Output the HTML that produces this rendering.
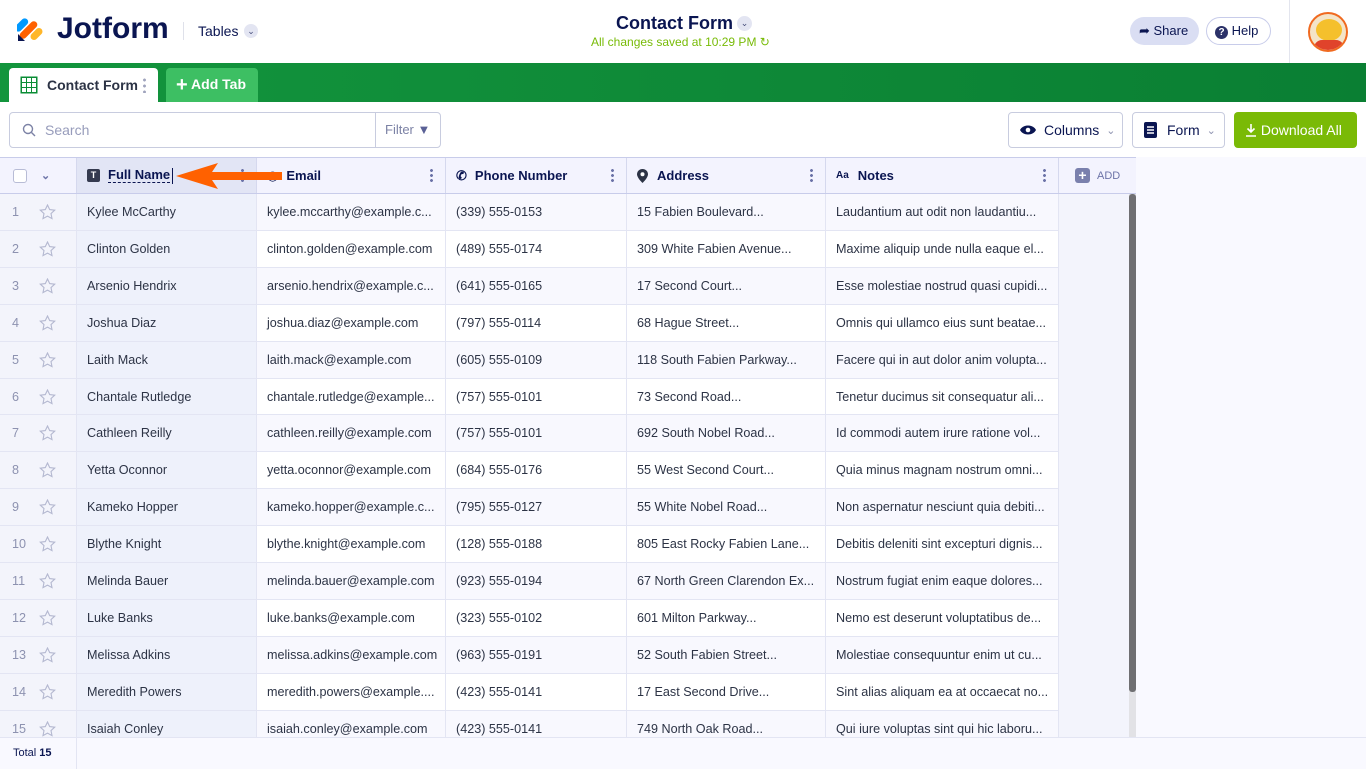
<!DOCTYPE html>
<html><head><meta charset="utf-8"><style>
*{box-sizing:border-box;margin:0;padding:0}
body{width:1366px;height:768px;overflow:hidden;font-family:"Liberation Sans",sans-serif;background:#f9f9ff;color:#2c3345;position:relative}
.top{position:absolute;left:0;top:0;width:1366px;height:63px;background:#fff}
.band{position:absolute;left:0;top:63px;width:1366px;height:39px;background:linear-gradient(90deg,#13953d,#0a7f33)}
.tool{position:absolute;left:0;top:102px;width:1366px;height:55px;background:#fff}
.btn{position:absolute;border:1px solid #c8ccdf;border-radius:4px;background:#fff;font-size:14px;color:#0a1551;display:flex;align-items:center}
.hdr{position:absolute;top:157px;left:0;height:37px;width:1136px;background:#f3f3fe;border-top:1px solid #c8ccea;border-bottom:1px solid #c8ccea}
.hc{position:absolute;top:0;height:35px;border-right:1px solid #d5d8ee;font-size:13px;font-weight:bold;color:#0a1551;display:flex;align-items:center;padding-left:10px}
.dots{position:absolute;right:12px;top:10px;width:3px;height:14px;background:radial-gradient(circle,#6c73a8 1.3px,transparent 1.6px) 0 0/3px 5px repeat-y}
.row{position:absolute;left:0;width:1059px;border-bottom:1px solid #e3e5f3;font-size:12.6px;color:#2c3345}
.row.o{background:#f8f8fe}.row.e{background:#fff}
.c{position:absolute;top:0;bottom:0;line-height:37px;padding-left:10px;white-space:nowrap;overflow:hidden;border-right:1px solid #e3e5f3}
.n{left:0;width:77px;background:#f3f4fb;color:#8d92b0;padding-left:12px}
.nm{left:77px;width:180px;background:#eef1fb}
.em{left:257px;width:189px}.ph{left:446px;width:181px}.ad{left:627px;width:199px}.no{left:826px;width:233px}
.star{position:absolute;left:39px;top:10px}
</style></head><body>
<div class="top">
 <svg style="position:absolute;left:17px;top:14px" width="28" height="28" viewBox="0 0 28 28"><rect x="1" y="3" width="7" height="16" rx="3.5" transform="rotate(45 4.5 11)" fill="#0099ff"/><rect x="8" y="5" width="7" height="22" rx="3.5" transform="rotate(45 11.5 16)" fill="#ff6100"/><rect x="16" y="13" width="7" height="14" rx="3.5" transform="rotate(45 19.5 20)" fill="#ffb629"/><path d="M1 20v7h7z" fill="#0a1551"/></svg>
 <div style="position:absolute;left:57px;top:12px;font-size:30px;font-weight:bold;color:#0a1551;letter-spacing:0px">Jotform</div>
 <div style="position:absolute;left:183px;top:22px;width:1px;height:18px;background:#dfe1ea"></div>
 <div style="position:absolute;left:198px;top:23px;font-size:14px;color:#0a1551">Tables</div>
 <div style="position:absolute;left:244px;top:24px;width:14px;height:14px;border-radius:50%;background:#e3e5f2;font-size:9px;text-align:center;line-height:14px;color:#454c7a">⌄</div>
 <div style="position:absolute;left:616px;top:13px;font-size:18px;font-weight:bold;color:#0a1551">Contact Form</div>
 <div style="position:absolute;left:737px;top:16px;width:15px;height:15px;border-radius:50%;background:#e3e5f2;font-size:9px;text-align:center;line-height:14px;color:#454c7a">⌄</div>
 <div style="position:absolute;left:591px;top:35px;font-size:12px;color:#78bb07">All changes saved at 10:29 PM ↻</div>
 <div style="position:absolute;left:1130px;top:17px;width:69px;height:28px;border-radius:14px;background:#dadef3;font-size:13px;color:#0a1551;line-height:28px;padding-left:9px">➦ Share</div>
 <div style="position:absolute;left:1206px;top:17px;width:65px;height:28px;border-radius:14px;border:1px solid #c8ccea;font-size:13px;color:#0a1551;line-height:26px;padding-left:8px"><span style="display:inline-block;width:13px;height:13px;border-radius:50%;background:#2b3168;color:#fff;font-size:10px;text-align:center;line-height:13px;font-weight:bold">?</span> Help</div>
 <div style="position:absolute;left:1289px;top:0;width:1px;height:63px;background:#e3e5ee"></div>
 <div style="position:absolute;left:1308px;top:12px;width:40px;height:40px;border-radius:50%;background:#f4e4c8;border:2px solid #f06a20;overflow:hidden"><div style="position:absolute;left:6px;top:5px;width:26px;height:22px;border-radius:50%;background:#f5c02c"></div><div style="position:absolute;left:4px;top:26px;width:30px;height:14px;background:#e0432b;border-radius:8px 8px 0 0"></div></div>
</div>
<div class="band">
 <div style="position:absolute;left:9px;top:5px;width:149px;height:34px;background:#fff;border-radius:4px 4px 0 0">
  <svg style="position:absolute;left:11px;top:8px" width="18" height="18" viewBox="0 0 18 18"><rect x="0.5" y="0.5" width="17" height="17" fill="#0a8d35"/><g fill="#fff"><rect x="2" y="2" width="4" height="4"/><rect x="7" y="2" width="4" height="4"/><rect x="12" y="2" width="4" height="4"/><rect x="2" y="7" width="4" height="4"/><rect x="7" y="7" width="4" height="4"/><rect x="12" y="7" width="4" height="4"/><rect x="2" y="12" width="4" height="4"/><rect x="7" y="12" width="4" height="4"/><rect x="12" y="12" width="4" height="4"/></g></svg>
  <div style="position:absolute;left:38px;top:9px;font-size:14px;font-weight:bold;color:#2c3345">Contact Form</div>
  <div style="position:absolute;left:134px;top:9px;width:3px;height:16px;background:radial-gradient(circle,#a0a4bd 1.3px,transparent 1.6px) 0 0/3px 6px repeat-y"></div>
 </div>
 <div style="position:absolute;left:166px;top:5px;width:92px;height:34px;background:#3dbf63;border-radius:4px 4px 0 0;color:#fff;font-size:14px;font-weight:bold;line-height:33px;padding-left:10px"><span style="font-size:20px;vertical-align:-2px">+</span> Add Tab</div>
</div>
<div class="tool">
 <div class="btn" style="left:9px;top:10px;width:432px;height:36px">
  <svg style="margin-left:12px" width="14" height="14" viewBox="0 0 14 14"><circle cx="6" cy="6" r="4.5" fill="none" stroke="#7c82a5" stroke-width="1.4"/><path d="M9.5 9.5l3.5 3.5" stroke="#7c82a5" stroke-width="1.4"/></svg>
  <span style="margin-left:9px;color:#979cbb">Search</span>
  <div style="position:absolute;left:365px;top:0;width:1px;height:34px;background:#c8ccdf"></div>
  <span style="position:absolute;left:375px;top:9px;font-size:13px;color:#7c82a5">Filter <span style="color:#5a6196">▼</span></span>
 </div>
 <div class="btn" style="left:1008px;top:10px;width:115px;height:36px;padding-left:11px"><svg width="16" height="12" viewBox="0 0 16 12"><path d="M0 6C3 0 13 0 16 6C13 12 3 12 0 6z" fill="#0a1551"/><circle cx="8" cy="6" r="2.3" fill="#fff"/></svg><span style="margin-left:8px">Columns</span><span style="margin-left:7px;color:#8d92b0;font-size:11px">⌄</span></div>
 <div class="btn" style="left:1132px;top:10px;width:93px;height:36px;padding-left:11px"><svg width="13" height="16" viewBox="0 0 13 16"><rect width="13" height="16" rx="2" fill="#0a1551"/><path d="M3 5h7M3 8h7M3 11h7" stroke="#fff" stroke-width="1.4"/></svg><span style="margin-left:10px">Form</span><span style="margin-left:7px;color:#8d92b0;font-size:11px">⌄</span></div>
 <div style="position:absolute;left:1234px;top:10px;width:123px;height:36px;background:#7aba06;border-radius:4px;color:#fff;font-size:14px;line-height:36px;padding-left:11px"><svg width="12" height="14" viewBox="0 0 12 14" style="vertical-align:-2px"><path d="M6 1v8M2.5 5.5L6 9l3.5-3.5M1 13h10" stroke="#fff" stroke-width="1.6" fill="none"/></svg> Download All</div>
</div>
<div class="hdr">
 <div class="hc" style="left:0;width:77px;background:#f3f3fe"><span style="display:inline-block;width:14px;height:14px;border:1px solid #b8bcd6;border-radius:3px;background:#fff;margin-left:3px"></span><span style="margin-left:14px;color:#6c73a8;font-size:11px">⌄</span></div>
 <div class="hc" style="left:77px;width:180px;background:#e2e5f5"><span style="display:inline-block;width:13px;height:13px;background:#343a4f;border-radius:2px;color:#fff;font-size:9px;text-align:center;line-height:13px">T</span><span style="margin-left:8px;border-bottom:1px dashed #0a1551;line-height:14px">Full Name</span><span style="width:1px;height:16px;background:#0a1551;margin-left:2px"></span><div class="dots"></div></div>
 <div class="hc" style="left:257px;width:189px"><span style="font-size:13px;font-weight:normal">◎</span><span style="margin-left:8px">Email</span><div class="dots"></div></div>
 <div class="hc" style="left:446px;width:181px"><span>✆</span><span style="margin-left:8px">Phone Number</span><div class="dots"></div></div>
 <div class="hc" style="left:627px;width:199px"><svg width="11" height="14" viewBox="0 0 11 14"><path d="M5.5 0C2.5 0 0 2.3 0 5.3 0 9 5.5 14 5.5 14S11 9 11 5.3C11 2.3 8.5 0 5.5 0z" fill="#2c3345"/><circle cx="5.5" cy="5.2" r="2" fill="#fff"/></svg><span style="margin-left:9px">Address</span><div class="dots"></div></div>
 <div class="hc" style="left:826px;width:233px"><span style="font-size:10px">Aa</span><span style="margin-left:9px">Notes</span><div class="dots"></div></div>
 <div class="hc" style="left:1059px;width:77px;border-right:none;padding-left:16px"><span style="display:inline-block;width:15px;height:15px;background:#7a80ad;border-radius:3px;color:#fff;font-size:14px;text-align:center;line-height:15px">+</span><span style="margin-left:7px;font-size:11px;font-weight:normal;color:#6c73a8">ADD</span></div>
</div>
<svg style="position:absolute;left:176px;top:161px" width="110" height="30" viewBox="0 0 110 30"><path d="M0 15L42 2 L36 11 L106 11 L106 19 L36 19 L42 28z" fill="#ff6100"/></svg>
<div style="position:absolute;left:1059px;top:194px;width:77px;height:543px;background:#f3f4fc;border-right:1px solid #e3e5f3"></div>
<div style="position:absolute;left:1129px;top:194px;width:7px;height:543px;background:#e2e2e6"></div>
<div style="position:absolute;left:1129px;top:194px;width:7px;height:498px;background:#6f6f72;border-radius:3px"></div>
<div id="rows"></div>
<div style="position:absolute;left:0;top:737px;width:1366px;height:31px;background:#f9f9ff;border-top:1px solid #e3e5f3"><div style="position:absolute;left:0;top:0;width:77px;height:31px;border-right:1px solid #e3e5f3;font-size:11px;color:#0a1551;padding:9px 0 0 13px">Total <b>15</b></div></div>
<script>
var d=[["Kylee McCarthy","kylee.mccarthy@example.c...","(339) 555-0153","15 Fabien Boulevard...","Laudantium aut odit non laudantiu..."],
["Clinton Golden","clinton.golden@example.com","(489) 555-0174","309 White Fabien Avenue...","Maxime aliquip unde nulla eaque el..."],
["Arsenio Hendrix","arsenio.hendrix@example.c...","(641) 555-0165","17 Second Court...","Esse molestiae nostrud quasi cupidi..."],
["Joshua Diaz","joshua.diaz@example.com","(797) 555-0114","68 Hague Street...","Omnis qui ullamco eius sunt beatae..."],
["Laith Mack","laith.mack@example.com","(605) 555-0109","118 South Fabien Parkway...","Facere qui in aut dolor anim volupta..."],
["Chantale Rutledge","chantale.rutledge@example...","(757) 555-0101","73 Second Road...","Tenetur ducimus sit consequatur ali..."],
["Cathleen Reilly","cathleen.reilly@example.com","(757) 555-0101","692 South Nobel Road...","Id commodi autem irure ratione vol..."],
["Yetta Oconnor","yetta.oconnor@example.com","(684) 555-0176","55 West Second Court...","Quia minus magnam nostrum omni..."],
["Kameko Hopper","kameko.hopper@example.c...","(795) 555-0127","55 White Nobel Road...","Non aspernatur nesciunt quia debiti..."],
["Blythe Knight","blythe.knight@example.com","(128) 555-0188","805 East Rocky Fabien Lane...","Debitis deleniti sint excepturi dignis..."],
["Melinda Bauer","melinda.bauer@example.com","(923) 555-0194","67 North Green Clarendon Ex...","Nostrum fugiat enim eaque dolores..."],
["Luke Banks","luke.banks@example.com","(323) 555-0102","601 Milton Parkway...","Nemo est deserunt voluptatibus de..."],
["Melissa Adkins","melissa.adkins@example.com","(963) 555-0191","52 South Fabien Street...","Molestiae consequuntur enim ut cu..."],
["Meredith Powers","meredith.powers@example....","(423) 555-0141","17 East Second Drive...","Sint alias aliquam ea at occaecat no..."],
["Isaiah Conley","isaiah.conley@example.com","(423) 555-0141","749 North Oak Road...","Qui iure voluptas sint qui hic laboru..."]];
var h="",star='<svg class="star" width="17" height="16" viewBox="0 0 17 16"><path d="M8.5 1l2.2 4.6 5 .6-3.7 3.4 1 5-4.5-2.5-4.5 2.5 1-5L1.3 6.2l5-.6z" fill="none" stroke="#b4b8d0" stroke-width="1.1"/></svg>';
d.forEach(function(r,i){var t=Math.round(194+i*36.9),t2=Math.round(194+(i+1)*36.9);h+='<div class="row '+(i%2?'e':'o')+'" style="top:'+t+'px;height:'+(t2-t)+'px"><div class="c n">'+(i+1)+star+'</div><div class="c nm">'+r[0]+'</div><div class="c em">'+r[1]+'</div><div class="c ph">'+r[2]+'</div><div class="c ad">'+r[3]+'</div><div class="c no">'+r[4]+'</div></div>';});
document.getElementById("rows").innerHTML=h;
</script>
</body></html>
